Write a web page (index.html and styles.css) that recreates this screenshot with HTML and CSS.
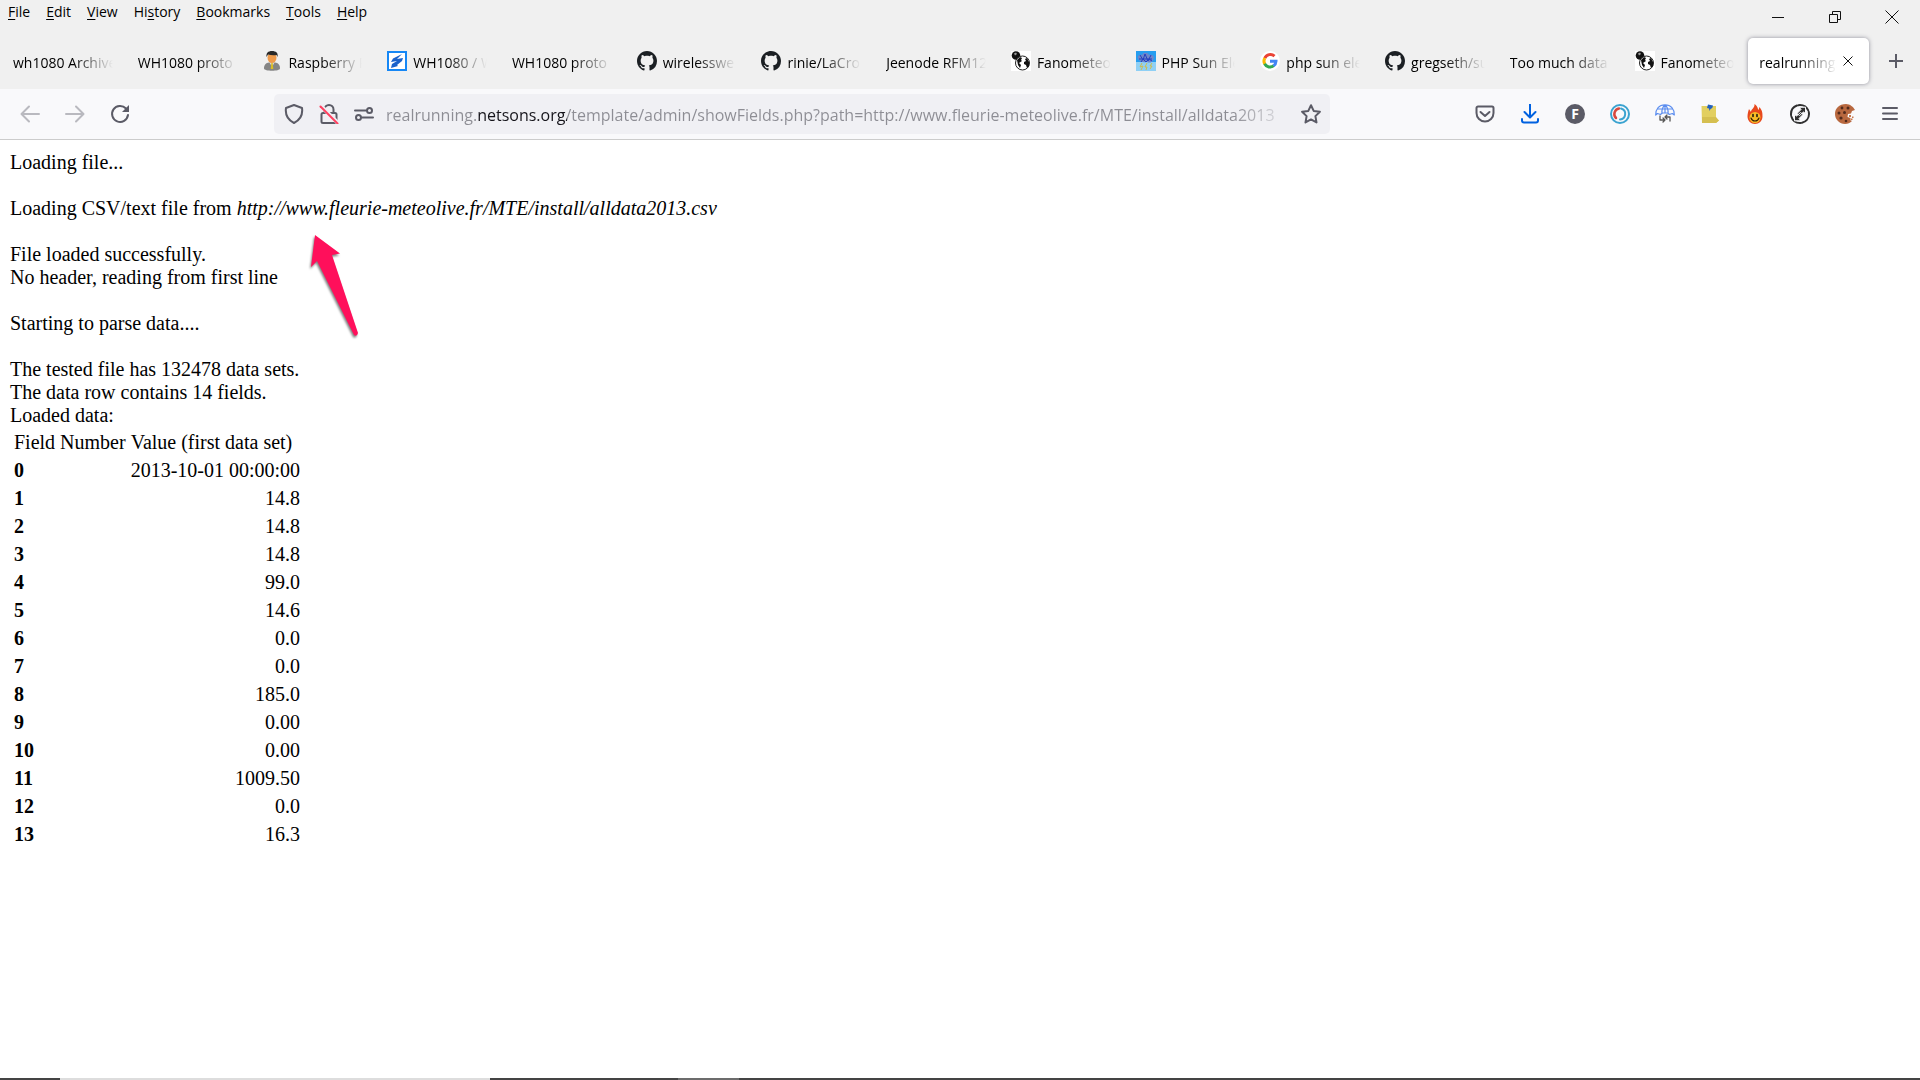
FILE: index.html
```
<!DOCTYPE html>
<html lang="en">

<head>
    <meta charset="UTF-8">
    <meta name="viewport" content="width=device-width, initial-scale=1.0">
    <title>realrunning.netsons.org</title>
    <link rel="stylesheet" href="styles.css">
</head>

<body>
    <!-- shared icons -->
    <svg class="sprite" aria-hidden="true">
        <symbol id="github" viewBox="0 0 16 16">
            <path fill="#1b1f23" d="M8 0C3.58 0 0 3.58 0 8c0 3.54 2.29 6.53 5.47 7.59.4.07.55-.17.55-.38 0-.19-.01-.82-.01-1.49-2.01.37-2.53-.49-2.69-.94-.09-.23-.48-.94-.82-1.13-.28-.15-.68-.52-.01-.53.63-.01 1.08.58 1.23.82.72 1.21 1.87.87 2.33.66.07-.52.28-.87.51-1.07-1.78-.2-3.64-.89-3.64-3.95 0-.87.31-1.59.82-2.15-.08-.2-.36-1.02.08-2.12 0 0 .67-.21 2.2.82.64-.18 1.32-.27 2-.27s1.36.09 2 .27c1.53-1.04 2.2-.82 2.2-.82.44 1.1.16 1.92.08 2.12.51.56.82 1.27.82 2.15 0 3.07-1.87 3.75-3.65 3.95.29.25.54.73.54 1.48 0 1.07-.01 1.93-.01 2.2 0 .21.15.46.55.38A8.01 8.01 0 0 0 16 8c0-4.42-3.58-8-8-8z" />
        </symbol>
        <symbol id="globes" viewBox="0 0 20 20">
            <rect width="20" height="20" fill="#fff" />
            <circle cx="5" cy="4.500" r="4.300" fill="#111" />
            <path d="M3 2.500l2-1 1 1.500-2 1.500z" fill="#999" />
            <circle cx="11.500" cy="12" r="7" fill="#fff" stroke="#222" stroke-width="1" />
            <path d="M6 9l3-3 2 1-1 2 1 1-3 2 2 2-1 3-2-3zM14 8l2-1 2 4v4l-2 2-1-3-2-1 0-2 2-1z" fill="#111" />
        </symbol>
    </svg>

    <header>
        <div class="titlebar">
            <nav class="menu">
                <button><u>F</u>ile</button>
                <button><u>E</u>dit</button>
                <button><u>V</u>iew</button>
                <button>Hi<u>s</u>tory</button>
                <button><u>B</u>ookmarks</button>
                <button><u>T</u>ools</button>
                <button><u>H</u>elp</button>
            </nav>
            <div class="window-buttons">
                <button aria-label="Minimize"><svg width="14" height="14" viewBox="0 0 14 14"><path d="M1 7.500h12" /></svg></button>
                <button aria-label="Restore"><svg width="14" height="14" viewBox="0 0 14 14"><path d="M1.500 4.500h8v8h-8zM4.500 4.500v-3h8v8h-3" /></svg></button>
                <button aria-label="Close"><svg width="14" height="14" viewBox="0 0 14 14"><path d="M.5.5l13 13M13.500.5l-13 13" /></svg></button>
            </div>
        </div>

        <div class="tabbar">
            <div class="tabs">
                <button class="tab"><span>wh1080 Archive</span></button>
                <button class="tab"><span>WH1080 proto</span></button>
                <button class="tab">
                    <svg width="20" height="20" viewBox="0 0 20 20">
                        <path d="M2 17.500c0-4 2-5.500 5-6h6c3 .5 5 2 5 6 0 3-16 3-16 0z" fill="#858585" />
                        <path d="M7.500 11.500h5L10 16z" fill="#ddd" />
                        <path d="M9.300 12h1.400l.6 6h-2.600z" fill="#d8bd25" />
                        <ellipse cx="10" cy="6.800" rx="4.500" ry="5.200" fill="#ef9b4b" />
                        <path d="M4.500 6C4 2 6 0 10 0s6.500 2 5.500 6l-1-2c-3 .5-6 .2-8.500-.5z" fill="#292929" />
                    </svg>
                    <span>Raspberry P</span>
                </button>
                <button class="tab">
                    <svg width="20" height="20" viewBox="0 0 20 20">
                        <rect x="1" y="1" width="18" height="18" fill="#fff" stroke="#1687f5" stroke-width="2" />
                        <path d="M15 3L6 7.500 4 11l6-1-5 3-1 4 7-2-1-1 5-4 1-3-6 1z" fill="#1b62cb" />
                    </svg>
                    <span>WH1080 / W</span>
                </button>
                <button class="tab"><span>WH1080 proto</span></button>
                <button class="tab"><svg width="20" height="20"><use href="#github" /></svg><span>wirelesswe</span></button>
                <button class="tab"><svg width="20" height="20"><use href="#github" /></svg><span>rinie/LaCro</span></button>
                <button class="tab"><span>Jeenode RFM12</span></button>
                <button class="tab"><svg width="20" height="20"><use href="#globes" /></svg><span>Fanometeo</span></button>
                <button class="tab">
                    <svg width="20" height="20" viewBox="0 0 20 20">
                        <rect width="20" height="20" fill="#8fd0f5" />
                        <rect width="20" height="11" fill="#269df0" />
                        <path d="M2 7c-1-3 3-4 4-3 1-3 6-3 7 0 5-1 6 3 4 5-1 3-4 3-6 2-4 1-8 0-9-4z" fill="#6f86c8" />
                        <path d="M4 4l3 5 2-6 3 7 3-6M3 8h13M5 11l2-3 3 3 3-3 3 2" stroke="#233fc0" fill="none" />
                        <path d="M6 12l-2 4 3-1-2 4M11 12l-2 4h2l-1 3M16 12l-2 3h2l-2 3" stroke="#d0bd4c" fill="none" />
                    </svg>
                    <span>PHP Sun Ele</span>
                </button>
                <button class="tab">
                    <svg width="20" height="20" viewBox="0 0 20 20">
                        <circle cx="10" cy="10" r="10" fill="#fff" />
                        <g fill="none" stroke-width="3">
                            <path d="M14.500 5.200A6 6 0 0 0 4.800 7.200" stroke="#ea4335" />
                            <path d="M4.800 7A6 6 0 0 0 4.800 13" stroke="#fbbc05" />
                            <path d="M4.600 12.800A6 6 0 0 0 13.800 14.700" stroke="#34a853" />
                            <path d="M13.500 14.900A6 6 0 0 0 16 10.200h-6" stroke="#4285f4" />
                        </g>
                    </svg>
                    <span>php sun ele</span>
                </button>
                <button class="tab"><svg width="20" height="20"><use href="#github" /></svg><span>gregseth/su</span></button>
                <button class="tab"><span>Too much data</span></button>
                <button class="tab"><svg width="20" height="20"><use href="#globes" /></svg><span>Fanometeo</span></button>
                <div class="tab active">
                    <span>realrunning.n</span>
                    <button aria-label="Close tab"><svg width="10" height="10" viewBox="0 0 10 10"><path d="M.5.5l9 9M9.500.5l-9 9" /></svg></button>
                </div>
            </div>
            <button class="new-tab" aria-label="New tab"><svg width="16" height="16" viewBox="0 0 16 16"><path d="M8 1v14M1 8h14" /></svg></button>
        </div>

        <div class="toolbar">
            <div class="nav-buttons">
                <button aria-label="Back" disabled><svg width="20" height="20" viewBox="0 0 20 20"><path d="M19 10H2M9 2.500L1.500 10 9 17.500" /></svg></button>
                <button aria-label="Forward" disabled><svg width="20" height="20" viewBox="0 0 20 20"><path d="M1 10h17M11 2.500l7.500 7.500-7.500 7.500" /></svg></button>
                <button aria-label="Reload"><svg width="20" height="20" viewBox="0 0 20 20"><path d="M18 11A8 8 0 1 1 16 4.500" /><path class="solid" d="M19 1v7h-7z" /></svg></button>
            </div>
            <div class="urlbar">
                <button aria-label="Tracking protection"><svg width="20" height="20" viewBox="0 0 20 20"><path d="M10 1l8 3c1 7-2 12-8 15C4 16 1 11 2 4z" /></svg></button>
                <button aria-label="Connection not secure"><svg width="20" height="20" viewBox="0 0 20 20"><path d="M5.500 9V5.500a4.500 4.500 0 0 1 9 0V9M4 9h12a1.500 1.500 0 0 1 1.500 1.500v7A1.500 1.500 0 0 1 16 19H4a1.500 1.500 0 0 1-1.500-1.500v-7A1.500 1.500 0 0 1 4 9z" /><path d="M2 2l17 17" stroke="#efeef3" stroke-width="4" /><path class="strike" d="M1.500 2.500l17 17" /></svg></button>
                <button aria-label="Permissions"><svg width="20" height="20" viewBox="0 0 20 20"><path d="M1 6.500h11M8 13.500h11" /><circle cx="15.500" cy="6.500" r="2.500" /><circle cx="4.500" cy="13.500" r="2.500" /></svg></button>
                <input type="text" aria-label="Address" value="realrunning.netsons.org/template/admin/showFields.php?path=http://www.fleurie-meteolive.fr/MTE/install/alldata2013">
                <button aria-label="Bookmark this page"><svg width="20" height="20" viewBox="0 0 20 20"><path d="M10 1.200l2.700 5.700 6.200.8-4.500 4.400 1.100 6.300-5.500-3-5.500 3 1.100-6.300L1.100 7.700l6.200-.8z" /></svg></button>
            </div>
            <div class="extensions">
                <button aria-label="Save to Pocket"><svg width="20" height="20" viewBox="0 0 20 20"><path d="M3 2.500h14a1.500 1.500 0 0 1 1.500 1.500v5a8.500 8.500 0 0 1-17 0V4A1.500 1.500 0 0 1 3 2.500zM5.500 8L10 12l4.500-4" /></svg></button>
                <button aria-label="Downloads"><svg class="blue" width="20" height="20" viewBox="0 0 20 20"><path d="M10 0v13M4.500 8l5.500 5.500L15.500 8M2 15v1.500A2 2 0 0 0 4 18.500h12a2 2 0 0 0 2-2V15" /></svg></button>
                <button class="badge" aria-label="F extension">F</button>
                <button aria-label="Session sync">
                    <svg width="20" height="20" viewBox="0 0 20 20">
                        <circle cx="10" cy="10" r="9" stroke="#3ba3d0" />
                        <path d="M9 4.500a5.600 5.600 0 0 0-3 9.500" stroke="#d8483e" stroke-width="2.500" />
                        <path d="M11 4.500a5.600 5.600 0 0 1-1 11" stroke="#3ba3d0" stroke-width="2" />
                    </svg>
                </button>
                <button aria-label="Proxy">
                    <svg width="20" height="20" viewBox="0 0 20 20">
                        <path d="M.7 11C.7 5 4 .8 10 .8s9.300 4.200 9.300 10.200l-2-1.500-3 1-1.500-1.500h-5.600L5.500 10.500l-3-1zM7 9.500C6.500 5 7.500 3 10 1c2.500 2 3.500 4 3 8.500M10 1v8M2.500 5h15" stroke="#5b8def" stroke-width="1.200" />
                        <path d="M5 12v4h5M8 14l2 2-2 2M15 17v-4h-5M12 11l-2 2 2 2" stroke="#555" stroke-width="1.300" />
                    </svg>
                </button>
                <button aria-label="Notes">
                    <svg width="20" height="20" viewBox="0 0 20 20">
                        <path d="M1.500 2H16v12c1 1.500 2 2 3 2.500l-3 2.500H2z" fill="#e2cf60" stroke="none" />
                        <path d="M2 13h14l3 3.500-3 2.500H2z" fill="#d5bf50" stroke="none" />
                        <path d="M8 .5l5 1-.5 2-1 1-1 .5-1 2-.5-2.500-2-.5z" fill="#2361bd" stroke="none" />
                    </svg>
                </button>
                <button aria-label="Flame">
                    <svg width="20" height="20" viewBox="0 0 20 20">
                        <path d="M9.500 0c4 3 3 5 4 6l1-3c3 4 3 6 3 9.500C17.500 17 14 20 10 20s-7.500-3-7.500-7.500C2.500 10 3 8 4 5l2 3c0-3 4-4 3.500-8z" fill="#e8491d" stroke="none" />
                        <circle cx="10" cy="13.500" r="5.500" fill="#f8bd25" stroke="none" />
                        <path d="M6 14c1.500 4 6.500 4 8 0" stroke="#362008" stroke-width="1.200" />
                        <path d="M8 10.500v2M12 10.500v2" stroke="#111" stroke-width="1.500" />
                    </svg>
                </button>
                <button aria-label="Redirect">
                    <svg width="20" height="20" viewBox="0 0 20 20">
                        <circle cx="10" cy="10" r="9" stroke="#303030" stroke-dasharray="12 1.500" />
                        <path class="bolt" d="M15.500 3.500v6l-2-1.500-4 3.500L7 9.500l4-4-1.500-2zM4.500 16.500v-6l2 1.500 4-3.500 2.500 2-4 4 1.500 2z" />
                    </svg>
                </button>
                <button aria-label="Cookies">
                    <svg width="20" height="20" viewBox="0 0 20 20">
                        <path d="M11 0C4 0 0 4.500 0 10s4.500 10 10 10c3 0 5-1 7-3l-2-1 .5-2-3-1 .5-3 3-.5 1-2.500 3-1C18.500 3 15 0 11 0z" fill="#b8683f" stroke="none" />
                        <g fill="#50291b" stroke="none"><circle cx="7" cy="4" r="1.400" /><circle cx="13" cy="4" r="1.500" /><circle cx="4" cy="9" r="1.500" /><circle cx="9.500" cy="8.500" r="1.500" /><circle cx="6" cy="14" r="1.600" /><circle cx="11" cy="17" r="1.300" /></g>
                        <path d="M14 11h2v2h-2zM17 12.500h1.500V14H17zM15.500 14.500h2V16h-2z" fill="#c8764b" stroke="none" />
                    </svg>
                </button>
                <button aria-label="Application menu"><svg width="20" height="20" viewBox="0 0 20 20"><path d="M3 4h14M3 9.500h14M3 15h14" /></svg></button>
            </div>
        </div>
    </header>

    <main>
        Loading file...<br><br>
        <div class="source">
            Loading CSV/text file from <i>http://www.fleurie-meteolive.fr/MTE/install/alldata2013.csv</i>
            <svg class="arrow" width="60" height="112" viewBox="0 0 60 112">
                <path d="M10 4L35 22.500 27 24 53 102Q52 106 49 104L12 30 6 36z" fill="#ff0f5b" />
            </svg>
        </div>
        <br>
        File loaded successfully.<br>
        No header, reading from first line<br><br>
        Starting to parse data....<br><br>
        The tested file has 132478 data sets.<br>
        The data row contains 14 fields.<br>
        Loaded data:
        <table>
            <thead>
                <tr><td>Field Number</td><td>Value (first data set)</td></tr>
            </thead>
            <tbody>
                <tr><th>0</th><td>2013-10-01 00:00:00</td></tr>
                <tr><th>1</th><td>14.8</td></tr>
                <tr><th>2</th><td>14.8</td></tr>
                <tr><th>3</th><td>14.8</td></tr>
                <tr><th>4</th><td>99.0</td></tr>
                <tr><th>5</th><td>14.6</td></tr>
                <tr><th>6</th><td>0.0</td></tr>
                <tr><th>7</th><td>0.0</td></tr>
                <tr><th>8</th><td>185.0</td></tr>
                <tr><th>9</th><td>0.00</td></tr>
                <tr><th>10</th><td>0.00</td></tr>
                <tr><th>11</th><td>1009.50</td></tr>
                <tr><th>12</th><td>0.0</td></tr>
                <tr><th>13</th><td>16.3</td></tr>
            </tbody>
        </table>
    </main>

    <footer></footer>
</body>

</html>
```
FILE: styles.css
```
* {
    box-sizing: border-box;
}

body {
    margin: 0;
    min-height: 100vh;
    display: flex;
    flex-direction: column;
    background-color: #fff;
    color: #000;
    font-family: "Liberation Serif", "Times New Roman", serif;
    font-size: 20px;
    line-height: 23px;
}

.sprite {
    display: none;
}

header {
    background-color: #f0f0f0;
    font-family: "Open Sans", "Segoe UI", sans-serif;
    font-size: 14px;
    line-height: 20px;
}

button {
    display: flex;
    align-items: center;
    justify-content: center;
    flex-shrink: 0;
    margin: 0;
    padding: 0;
    border: 0;
    background: none;
    color: inherit;
    font: inherit;
}

svg {
    flex-shrink: 0;
}

.titlebar {
    height: 33px;
    display: flex;
    justify-content: space-between;
}

.menu {
    display: flex;
    gap: 16px;
    padding-left: 8px;
    height: 24px;
}

.menu u {
    text-underline-offset: 2px;
}

.window-buttons {
    display: flex;
}

.window-buttons button {
    width: 57px;
}

.window-buttons svg,
.active svg,
.new-tab svg {
    fill: none;
    stroke: #111;
}

.tabbar {
    height: 56px;
    display: flex;
    align-items: center;
}

.tabs {
    flex: 1;
    display: flex;
    min-width: 0;
}

.tab {
    flex: 1 1 0;
    min-width: 0;
    height: 46px;
    margin: 0 2px;
    padding: 0 10px 0 11px;
    display: flex;
    align-items: center;
    gap: 6px;
}

.tab span {
    flex: 1;
    min-width: 0;
    padding-top: 3px;
    overflow: hidden;
    white-space: nowrap;
    text-align: left;
    mask-image: linear-gradient(to left, transparent, #000 40px);
}

.active {
    gap: 0;
    background-color: #fff;
    border-radius: 5px;
    box-shadow: 0 0 4px rgba(80, 80, 100, 0.6);
}

.active button {
    width: 22px;
    height: 20px;
}

.new-tab {
    width: 49px;
    height: 46px;
}

.new-tab svg {
    stroke: #5b5b66;
    stroke-width: 2;
}

.toolbar {
    height: 51px;
    display: flex;
    align-items: center;
    background-color: #f9f9fb;
    border-bottom: 1px solid #ccc;
}

.toolbar svg {
    fill: none;
    stroke: #5b5b66;
    stroke-width: 2;
    stroke-linecap: round;
    stroke-linejoin: round;
}

.toolbar .solid {
    fill: #5b5b66;
    stroke: none;
}

.toolbar .blue {
    stroke: #0061e0;
}

.toolbar .strike {
    stroke: #ff4060;
}

.toolbar .bolt {
    fill: #303030;
    stroke: #f9f9fb;
    stroke-width: 1;
}

.toolbar button:disabled {
    opacity: 0.4;
}

.nav-buttons {
    flex: 0 0 274px;
    display: flex;
    gap: 5px;
    padding-left: 10px;
}

.nav-buttons button {
    width: 40px;
    height: 40px;
}

.urlbar {
    width: 55%;
    height: 40px;
    display: flex;
    align-items: center;
    padding: 0 2px;
    background-color: #f0f0f4;
    border-radius: 5px;
}

.urlbar button {
    width: 35px;
    height: 38px;
}

/* host name is darker than the rest of the address */
.urlbar input {
    flex: 1;
    min-width: 0;
    height: 38px;
    padding: 2px 0 0;
    margin-left: 5px;
    border: 0;
    outline: 0;
    font: inherit;
    font-size: 16px;
    color: transparent;
    background: linear-gradient(to right, #8d8d94 92px, #15141a 92px, #15141a 181px, #8d8d94 181px);
    background-clip: text;
    -webkit-background-clip: text;
    mask-image: linear-gradient(to left, transparent, #000 60px);
}

.extensions {
    flex: 1;
    display: flex;
    justify-content: flex-end;
    gap: 5px;
    padding-right: 10px;
}

.extensions button {
    width: 40px;
    height: 40px;
}

.extensions .badge {
    width: 20px;
    height: 20px;
    margin: 10px;
    border-radius: 50%;
    background-color: #5b5b66;
    color: #fff;
    font-size: 14px;
    font-weight: bold;
}

main {
    flex: 1;
    padding: 11px 10px;
}

.source {
    position: relative;
}

/* pointer drawn over the text */
.arrow {
    position: absolute;
    left: 295px;
    top: 34px;
    filter: drop-shadow(-1px 2px 1px rgba(0, 0, 0, 0.5));
}

table {
    border-spacing: 3px;
}

th,
td {
    padding: 1px;
}

th {
    text-align: left;
}

tbody td {
    text-align: right;
}

/* sliver of the taskbar */
footer {
    height: 2px;
    background: linear-gradient(to right, #444 60px, #ddd 60px, #ddd 490px, #444 490px, #444 678px, #6c6c6c 678px, #6c6c6c 739px, #444 739px);
}
```
